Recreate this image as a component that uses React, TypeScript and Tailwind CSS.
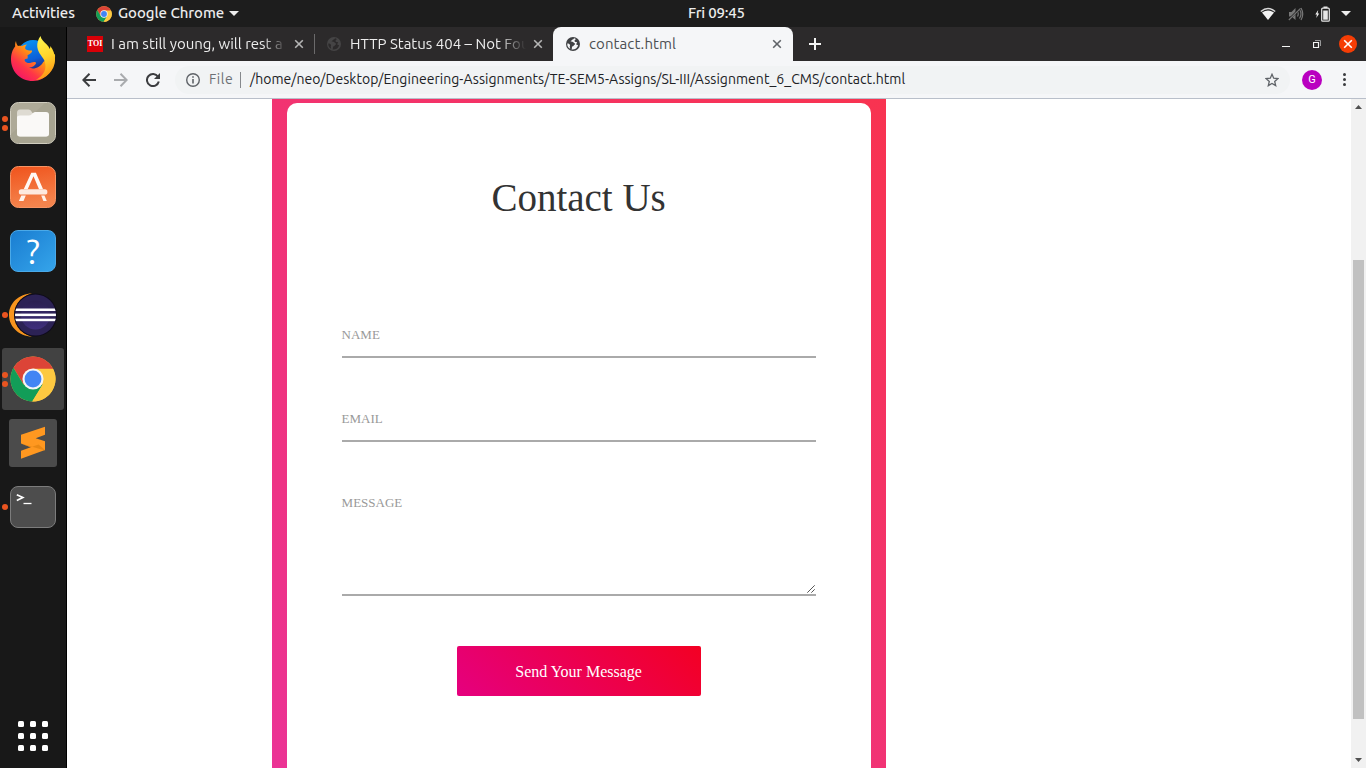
import React from "react";

const ui = "font-['Ubuntu','Noto_Sans',sans-serif]";

function ChromeLogo({ size }: { size: number }) {
  return (
    <svg width={size} height={size} viewBox="0 0 48 48" className="shrink-0">
      <circle cx="24" cy="24" r="23.5" fill="#fdc941" />
      <path d="M24 .5A23.5 23.5 0 0 0 3.6 12.3L14 29.5 24 13.4h21A23.5 23.5 0 0 0 24 .5z" fill="#dc4437" />
      <path d="M3.6 12.3A23.5 23.5 0 0 0 23.2 47.5L34.3 29.6 24 34.5l-10-5z" fill="#129d58" />
      <path d="M23.2 47.5L34.3 29.6 33 18l12-4.6a23.5 23.5 0 0 1-21.8 34.1z" fill="#fdc941" />
      <circle cx="24" cy="24" r="11" fill="#f4f5f5" />
      <circle cx="24" cy="24" r="8.8" fill="#4285f4" />
    </svg>
  );
}

function Globe({ color, hole }: { color: string; hole: string }) {
  return (
    <svg width="14" height="14" viewBox="0 0 14 14" className="shrink-0">
      <circle cx="7" cy="7" r="7" fill={color} />
      <path d="M8 1.2c-.2.9-.9 1.4-1.9 1.5-.4.9-1.3 1-1.4 1.8 1 .1 2.300 0 2.900.9.5.9 1.500.5 1.500 1.500-.1.9-1.200.8-1.400 1.700-.3.9-.9 1-1.700 1-.2.9.3 1.800-.5 2.900 2.900.5 6-1.300 6.600-4.300-.9-.4-1.500-.2-1.900-.9-.2-.9.9-.9.9-1.900-.9-.7-2.300-.1-2.600-1.400.1-.9.9-.9 1.300-1.900-.5-.5-1.100-.8-1.800-.9z" fill={hole} />
      <path d="M1.300 6.600c1 .1 2.300.3 2.700 1.300.3.900-.6 1.400-.2 2.200l.4 1.700C2.300 11 1 9 1.300 6.600z" fill={hole} />
    </svg>
  );
}

function Cross({ color }: { color: string }) {
  return (
    <svg width="10" height="10" viewBox="0 0 10 10" className="shrink-0">
      <path d="M1.200 1.200l7.600 7.600M8.800 1.200L1.200 8.800" stroke={color} strokeWidth="1.6" />
    </svg>
  );
}

function Firefox() {
  return (
    <svg width="46" height="48" viewBox="0 0 46 48">
      <defs>
        <linearGradient id="ffBody" x1="0.1" y1="0.9" x2="0.8" y2="0.1">
          <stop offset="0" stopColor="#f3126a" />
          <stop offset="0.3" stopColor="#ff3647" />
          <stop offset="0.6" stopColor="#ff8a16" />
          <stop offset="1" stopColor="#ffd52e" />
        </linearGradient>
        <linearGradient id="ffFlame" x1="0.3" y1="0" x2="0.5" y2="1">
          <stop offset="0" stopColor="#fff44f" />
          <stop offset="0.5" stopColor="#ffd42a" />
          <stop offset="1" stopColor="#ff8f14" />
        </linearGradient>
        <linearGradient id="ffGlobe" x1="0.3" y1="0" x2="0.6" y2="1">
          <stop offset="0" stopColor="#0593f3" />
          <stop offset="0.6" stopColor="#0c5fd8" />
          <stop offset="1" stopColor="#25206e" />
        </linearGradient>
      </defs>
      <circle cx="23" cy="21" r="16" fill="url(#ffGlobe)" />
      <path d="M6 6c.2 2 .8 3.800 2 5 1.500-.4 2.800-.4 4 0 1.300-1 3-1.500 5-1.600-1.500 1.200-2 2.800-1.700 4.500 1.400 1.300 3.500 1.500 6.700 1.600.3 1.700-.8 2.900-4.500 4.700.4 1.900.2 2.900-.3 3.700-2.200-.5-3.200 1-2.200 2.400 1.500 2 4.200 2.200 6.500 1.200 2.200-.9 4-.8 4.700.5-1 2.600-4 4.700-7.300 4.600 5.200 2.300 11.600-.5 14.300-5.700L45 19c1 14-8.500 27-22 27C9.500 46 .6 35.500 1 23.500 1.200 17 3.500 13.500 5.200 11.200c-.2-1.800 0-3.500.8-5.200z" fill="url(#ffBody)" />
      <path d="M30.500 1c.6 3.700 3.600 5.700 6 8.300 1.500 1.400 2.600 3 3.300 4.800.4-1 .6-2 .5-3 3 4 4.700 8.500 4.700 13.400C45 35.500 36 44 26 45c8.500-5 11-11.500 8.700-18.500C33.300 22 28.200 18.800 27.300 12c-.4-4 .9-8 3.200-11z" fill="url(#ffFlame)" />
    </svg>
  );
}

function Files() {
  return (
    <svg width="48" height="44" viewBox="0 0 48 44">
      <rect x="1.500" y="1.500" width="45" height="41" rx="8" fill="#aeaa98" stroke="#d0cdbf" />
      <path d="M36 2L2 33v3q0 6 7 6h30q7 0 7-7V9q0-7-7-7z" fill="#a39f8d" opacity=".55" />
      <path d="M8 12q0-3.500 3-3.500h8.500q2 0 3 2l1 1.500H37q3 0 3 3v17.500q0 3-3 3H11q-3 0-3-3z" fill="#dedbd2" />
      <path d="M8 16.500q0-2 3-2h9q2 0 3.500-2t3-1.500H37q3 0 3 3v18.500q0 3-3 3H11q-3 0-3-3z" fill="#faf9f7" />
    </svg>
  );
}

function Software() {
  return (
    <svg width="48" height="44" viewBox="0 0 48 44">
      <defs>
        <linearGradient id="sw" x1="0" y1="0" x2="0.2" y2="1">
          <stop offset="0" stopColor="#f0531c" />
          <stop offset="1" stopColor="#f4844d" />
        </linearGradient>
      </defs>
      <rect x="1.500" y="1.500" width="45" height="41" rx="8" fill="url(#sw)" stroke="#f79464" />
      <path d="M22.300 7.800h4.600l7.200 16.500h-4.100L24.500 11.300 18.700 24.300h-4z" fill="#fff8f4" />
      <path d="M12.300 30.500h4.500l-2.300 5.400H9.900zM32.200 30.500h3.300l2.300 5.400h-3.400z" fill="#fff2eb" />
      <rect x="9.800" y="24.300" width="28.600" height="5.200" rx="2.600" fill="#fde9df" />
    </svg>
  );
}

function Help() {
  return (
    <div className="h-[42px] w-[46px] rounded-[8px] border border-[#4aa9e8] bg-linear-to-br from-[#197dd1] to-[#35a4ea] text-center font-['Ubuntu','Open_Sans',sans-serif] text-[34px] leading-[40px] text-white">
      ?
    </div>
  );
}

function Eclipse() {
  return (
    <svg width="50" height="46" viewBox="0 0 50 46">
      <defs>
        <linearGradient id="ecl" x1="0" y1="0" x2="0" y2="1">
          <stop offset="0" stopColor="#2a1f50" />
          <stop offset="1" stopColor="#3f2f7c" />
        </linearGradient>
        <clipPath id="disc"><circle cx="27.500" cy="23" r="20.500" /></clipPath>
      </defs>
      <path d="M24 1.300C11 2 1 11 1 23s10 21 23 21.700C14 42 6.500 34 6.500 23S14 4 24 1.300z" fill="#f7941e" />
      <circle cx="27.500" cy="23" r="21.500" fill="#0f0b1c" />
      <circle cx="27.500" cy="23" r="20.500" fill="#2c2255" />
      <circle cx="27.500" cy="23" r="14.500" fill="url(#ecl)" />
      <g clipPath="url(#disc)" fill="#fff">
        <rect x="6" y="16.500" width="44" height="2.500" />
        <rect x="6" y="21.600" width="44" height="2.500" />
        <rect x="6" y="26.700" width="44" height="2.500" />
      </g>
    </svg>
  );
}

function Sublime() {
  return (
    <svg width="48" height="48" viewBox="0 0 48 48">
      <rect width="48" height="48" rx="3" fill="#4b4b4b" />
      <path d="M12 15.700L36 7.700v8L26.700 19.300 36 22.300V31L12 39.700v-8l9.700-3.400L12 24.500z" fill="#ff9820" />
      <path d="M12 24.500L36 31.500V31l-6.500-5.500L21.700 28.300z" fill="#e08210" opacity=".7" />
    </svg>
  );
}

function Terminal() {
  return (
    <div className="flex h-[42px] w-[46px] items-start rounded-[8px] border border-[#7c7c7c] bg-[#4d4d4d] pt-[7px] pl-[5px]">
      <svg width="16" height="12" viewBox="0 0 16 12" fill="none" stroke="#fff">
        <path d="M.8.800l6 2.800-6 2.800" strokeWidth="1.700" />
        <path d="M7.500 9.500h8" strokeWidth="1.300" />
      </svg>
    </div>
  );
}

const dock: { icon: React.ReactNode; dots: number; active?: boolean }[] = [
  { icon: <Firefox />, dots: 0 },
  { icon: <Files />, dots: 2 },
  { icon: <Software />, dots: 0 },
  { icon: <Help />, dots: 0 },
  { icon: <Eclipse />, dots: 1 },
  { icon: <ChromeLogo size={46} />, dots: 2, active: true },
  { icon: <Sublime />, dots: 0 },
  { icon: <Terminal />, dots: 1 },
];

function Dock() {
  return (
    <nav className="flex w-[67px] shrink-0 flex-col border-r border-black bg-[#181818]">
      {dock.map((d, i) => (
        <div key={i} className="relative flex h-16 shrink-0 items-center justify-center">
          <div className={d.active ? "flex h-[62px] w-[62px] items-center justify-center rounded-[3px] bg-[#424242]" : "flex h-[62px] w-[62px] items-center justify-center"}>
            {d.icon}
          </div>
          <div className="absolute top-0 left-[2px] flex h-full flex-col justify-center gap-[3px]">
            {Array.from({ length: d.dots }, (_, k) => (
              <i key={k} className="h-[6px] w-[6px] rounded-full bg-[#e95420]" />
            ))}
          </div>
        </div>
      ))}
      <div className="mt-auto mb-[17px] grid grid-cols-3 gap-[6px] self-center">
        {Array.from({ length: 9 }, (_, k) => (
          <i key={k} className="h-[6px] w-[6px] rounded-[1.5px] bg-white" />
        ))}
      </div>
    </nav>
  );
}

function TopBar() {
  return (
    <header className={`flex h-[27px] items-center bg-[#1d1d1d] text-[15px] font-medium text-[#ececec] ${ui}`}>
      <div className="flex w-[688px] items-center">
        <span className="ml-3 w-[84px] tracking-[-0.1px] whitespace-nowrap">Activities</span>
        <ChromeLogo size={16} />
        <span className="ml-[6px] w-[107px] tracking-[-0.05px] whitespace-nowrap">Google Chrome</span>
        <svg className="ml-1" width="10" height="5" viewBox="0 0 10 5"><path d="M0 0h10L5 5z" fill="#ececec" /></svg>
      </div>
      <span className="tracking-[-0.2px] whitespace-nowrap">Fri 09:45</span>
      <div className="flex flex-1 items-center justify-end pr-[15px]">
        <svg width="16" height="14" viewBox="0 0 16 14" className="mr-[12px]">
          <path d="M8 13L2 5.500Q8 1.500 14 5.500z" fill="#f2f2f2" />
          <path d="M.8 4.500Q8-1.500 15.200 4.500" fill="none" stroke="#d8d8d8" strokeWidth="1.500" />
        </svg>
        <svg width="16" height="14" viewBox="0 0 16 14" className="mr-[11px]" fill="none" stroke="#777">
          <path d="M1 5h2.500L7.500 1v12L3.500 9.500H1z" fill="#777" stroke="none" />
          <path d="M9.500 4.500q1.500 2.500 0 5M11.500 2.500q3 4.500 0 9M13 1q3.500 6 0 12" strokeWidth="1.200" />
          <path d="M1 12.500L12 1.500" stroke="#1d1d1d" strokeWidth="2" />
          <path d="M.8 13L12.500 1.300" strokeWidth="1.100" />
        </svg>
        <svg width="16" height="16" viewBox="0 0 16 16" className="mr-[10px]">
          <path d="M3.200 4L.3 8.600h1.600L1.300 12 4.200 7.400H2.600z" fill="#f2f2f2" />
          <rect x="6.700" y="2.200" width="7.600" height="13" rx="1" fill="none" stroke="#e6e6e6" strokeWidth="1.200" />
          <rect x="8.500" y=".5" width="4" height="1.500" fill="#e6e6e6" />
          <rect x="8.200" y="4.500" width="4.600" height="9.200" fill="#e6e6e6" />
        </svg>
        <svg width="10" height="5" viewBox="0 0 10 5"><path d="M0 0h10L5 5z" fill="#ececec" /></svg>
      </div>
    </header>
  );
}

function TabStrip() {
  return (
    <div className={`flex h-[34px] bg-[#2c2a2b] text-[15px] text-[#ededed] ${ui}`}>
      <div className="flex w-[247px] items-center pl-5">
        <span className="h-4 w-4 shrink-0 bg-[#d90007] text-center font-['Liberation_Serif',serif] text-[8px] leading-4 font-bold text-white">TOI</span>
        <span className="ml-2 w-[176px] mask-r-from-[86%] mask-r-to-[100%] whitespace-nowrap">I am still young, will rest a</span>
        <span className="ml-[7px] flex"><Cross color="#b5b5b5" /></span>
      </div>
      <div className="my-[7px] w-px bg-[#6b6a6b]" />
      <div className="flex w-[238px] items-center pl-3">
        <Globe color="#454445" hole="#2c2a2b" />
        <span className="ml-[9px] w-[176px] mask-r-from-[84%] mask-r-to-[100%] whitespace-nowrap">HTTP Status 404 – Not Fou</span>
        <span className="ml-[7px] flex"><Cross color="#b5b5b5" /></span>
      </div>
      <div className="flex w-[240px] items-center rounded-t-[8px] bg-[#f5f6f8] pl-[13px] text-[#4c4f53]">
        <Globe color="#404144" hole="#f5f6f8" />
        <span className="ml-[9px] w-[183px] tracking-[0.1px] whitespace-nowrap">contact.html</span>
        <Cross color="#5f6368" />
      </div>
      <div className="flex flex-1 items-center">
        <svg className="ml-4" width="12" height="12" viewBox="0 0 12 12"><path d="M6 0v12M0 6h12" stroke="#f4f4f4" strokeWidth="2" /></svg>
        <svg className="mt-[5px] ml-auto" width="8" height="1" viewBox="0 0 8 1"><path d="M0 .5h8" stroke="#f4f4f4" /></svg>
        <svg className="ml-[23px]" width="8" height="8" viewBox="0 0 8 8" fill="none" stroke="#f4f4f4">
          <path d="M.5 2.500h5v5h-5z" strokeWidth="1.200" />
          <path d="M2 .5h5.500V6" stroke="#99999a" />
        </svg>
        <span className="mr-[9px] ml-[18px] flex h-[18px] w-[18px] items-center justify-center rounded-full bg-[#f53d05]">
          <Cross color="#fff" />
        </span>
      </div>
    </div>
  );
}

function Toolbar() {
  return (
    <div className={`flex h-[38px] items-center border-b border-[#b9bfca] bg-[#f5f6f8] ${ui}`}>
      <svg className="ml-[15px]" width="14" height="14" viewBox="0 0 14 14" fill="none" stroke="#3c3d40" strokeWidth="2"><path d="M14 7H1.500M7.500.8L1.300 7l6.200 6.200" /></svg>
      <svg className="ml-[18px]" width="14" height="14" viewBox="0 0 14 14" fill="none" stroke="#a9abae" strokeWidth="2"><path d="M0 7h12.500M6.500.8L12.700 7l-6.200 6.200" /></svg>
      <svg className="ml-[18px]" width="14" height="14" viewBox="0 0 14 14" fill="none" stroke="#3c3d40" strokeWidth="2"><path d="M12 3.800A6 6 0 1 0 12.800 8.500" /><path d="M14 0v6H8z" fill="#3c3d40" stroke="none" /></svg>
      <div className="ml-[15px] flex h-7 w-[1115px] items-center rounded-full bg-[#f1f3f4] pl-[11px]">
        <svg width="14" height="14" viewBox="0 0 14 14" fill="none" stroke="#5f6368" strokeWidth="1.400"><circle cx="7" cy="7" r="6.300" /><path d="M7 6v4.500M7 3.200v1.500" strokeWidth="1.600" /></svg>
        <span className="ml-[9px] w-[31px] text-[14px] tracking-[0.5px] text-[#6d7074]">File</span>
        <i className="h-4 w-px bg-[#85888c]" />
        <span className="ml-[9px] text-[14px] tracking-[0.04px] whitespace-nowrap text-[#202124]">/home/neo/Desktop/Engineering-Assignments/TE-SEM5-Assigns/SL-III/Assignment_6_CMS/contact.html</span>
        <svg className="mr-[11px] ml-auto" width="14" height="14" viewBox="0 0 14 14" fill="none" stroke="#5f6368" strokeWidth="1.300"><path d="M7 1.300l1.700 3.900 4.200.4-3.200 2.800 1 4.200L7 10.400l-3.700 2.200 1-4.200L1.100 5.600l4.200-.4z" /></svg>
      </div>
      <span className="ml-3 h-5 w-5 rounded-full bg-[#b900c0] text-center font-['Roboto',sans-serif] text-[11px] leading-5 text-white">G</span>
      <div className="ml-[21px] flex flex-col gap-[2px]">
        <i className="h-[3px] w-[3px] rounded-full bg-[#3c3d40]" />
        <i className="h-[3px] w-[3px] rounded-full bg-[#3c3d40]" />
        <i className="h-[3px] w-[3px] rounded-full bg-[#3c3d40]" />
      </div>
    </div>
  );
}

function ContactPage() {
  return (
    <main className="flex min-h-0 flex-1 overflow-hidden bg-white font-['Liberation_Serif',serif]">
      <div className="ml-[204.6px] h-[669px] w-[614px] shrink-0 bg-[linear-gradient(45deg,#eb3395,#f83350)] px-[15px] pt-1">
        <section className="flex h-full flex-col items-stretch rounded-t-[10px] bg-white px-[55px] pt-[72px]">
          <h1 className="text-center text-[39px] leading-[46px] text-[#333]">Contact Us</h1>
          <div className="mt-[101px] h-[36px] border-b-2 border-[#aaa] pt-[5px] text-[13px] leading-[15px] text-[#999]">NAME</div>
          <div className="mt-12 h-[36px] border-b-2 border-[#aaa] pt-[5px] text-[13px] leading-[15px] text-[#999]">EMAIL</div>
          <div className="mt-12 flex h-[106px] border-b-2 border-[#aaa] pt-[5px] text-[13px] leading-[15px] text-[#999]">
            <span>MESSAGE</span>
            <svg className="mr-[1px] mb-[1px] ml-auto self-end" width="8" height="8" viewBox="0 0 8 8" stroke="#555" strokeWidth="1"><path d="M.3 7.700L7.700.3M4.300 7.700l3.400-3.400" /></svg>
          </div>
          <button className="mt-[50px] h-[50px] w-[244px] self-center rounded-[2px] bg-[linear-gradient(45deg,#e5007f,#f30023)] pt-[2px] text-[16px] text-white">Send Your Message</button>
        </section>
      </div>
      <aside className="ml-auto flex w-[15px] flex-col items-center bg-[#f1f1f1]">
        <svg className="mt-[6px]" width="7" height="4" viewBox="0 0 7 4"><path d="M0 4l3.500-4L7 4z" fill="#505050" /></svg>
        <div className="mt-[151px] h-[459px] w-[11px] bg-[#c1c1c1]" />
        <svg className="mt-auto mb-[6px]" width="7" height="4" viewBox="0 0 7 4"><path d="M0 0l3.500 4L7 0z" fill="#505050" /></svg>
      </aside>
    </main>
  );
}

export default function App() {
  return (
    <div className="flex h-[768px] w-[1366px] flex-col overflow-hidden">
      <TopBar />
      <div className="flex min-h-0 flex-1">
        <Dock />
        <div className="flex min-w-0 flex-1 flex-col">
          <TabStrip />
          <Toolbar />
          <ContactPage />
        </div>
      </div>
    </div>
  );
}
